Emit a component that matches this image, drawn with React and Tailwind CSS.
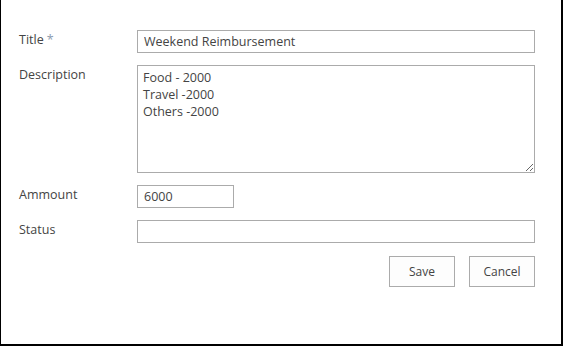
import React from 'react';

const inputBox = 'h-[23px] border border-[#ababab] bg-white px-[6px] text-[12.5px] text-[#444] outline-none';

const Row = ({ label, required, children, className = '' }) => (
    <div className={`flex items-start ${className}`}>
        <div className="w-[118px] shrink-0 text-[12.5px] leading-[20px] text-[#444]">
            {label}
            {required && <span className="ml-[3px] text-[#8c9bb0]">*</span>}
        </div>
        {children}
    </div>
);

const App = () => {
    return (
        <div
            className="h-[346px] w-[563px] border-b-2 border-l border-r-2 border-black bg-white pl-[18px] pt-[30px]"
            style={{ fontFamily: '"Open Sans", "Noto Sans", sans-serif' }}
        >
            {/* Title */}
            <Row label="Title" required>
                <input className={`${inputBox} w-[398px]`} defaultValue="Weekend Reimbursement" />
            </Row>

            {/* Description */}
            <Row label="Description" className="mt-[12px]">
                <textarea
                    className="h-[108px] w-[398px] resize border border-[#ababab] bg-white px-[5px] pt-[3px] text-[12.5px] leading-[17px] text-[#444] outline-none"
                    defaultValue={'Food - 2000\nTravel -2000\nOthers -2000'}
                />
            </Row>

            {/* Ammount */}
            <Row label="Ammount" className="mt-[12px]">
                <input className={`${inputBox} w-[97px]`} defaultValue="6000" />
            </Row>

            {/* Status */}
            <Row label="Status" className="mt-[12px]">
                <input className={`${inputBox} w-[398px]`} defaultValue="" />
            </Row>

            {/* Buttons */}
            <div className="mt-[13px] flex w-[516px] justify-end gap-[14px]">
                <button className="h-[31px] w-[66px] border border-[#ababab] bg-[#fdfdfd] text-[12px] text-[#444]">Save</button>
                <button className="h-[31px] w-[66px] border border-[#ababab] bg-[#fdfdfd] text-[12px] text-[#444]">Cancel</button>
            </div>
        </div>
    );
};

export default App;
